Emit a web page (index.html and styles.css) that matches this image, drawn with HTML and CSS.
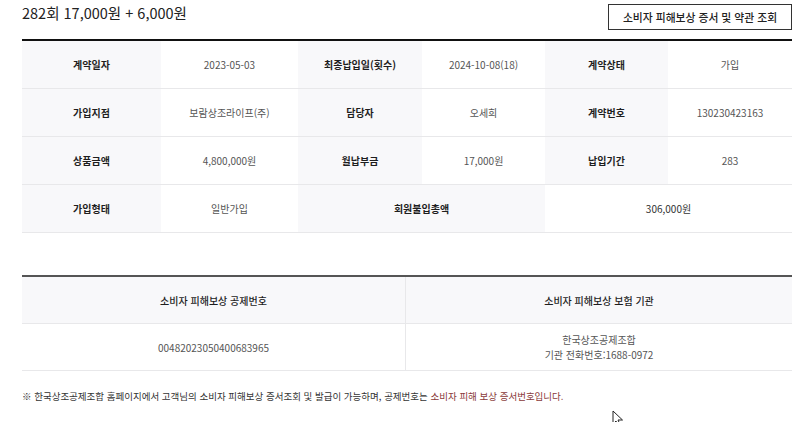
FILE: index.html
```html
<!DOCTYPE html>
<html lang="ko">
<head>
<meta charset="utf-8">
<link rel="stylesheet" href="styles.css">
</head>
<body>
<div class="page">
  <div class="head">
    <h1 class="title">282회 17,000원 + 6,000원</h1>
    <button class="btn">소비자 피해보상 증서 및 약관 조회</button>
  </div>

  <div class="info">
    <div class="c lab">계약일자</div>
    <div class="c val">2023-05-03</div>
    <div class="c lab">최종납입일(횟수)</div>
    <div class="c val">2024-10-08(18)</div>
    <div class="c lab">계약상태</div>
    <div class="c val">가입</div>

    <div class="c lab">가입지점</div>
    <div class="c val">보람상조라이프(주)</div>
    <div class="c lab">담당자</div>
    <div class="c val">오세희</div>
    <div class="c lab">계약번호</div>
    <div class="c val">130230423163</div>

    <div class="c lab">상품금액</div>
    <div class="c val">4,800,000원</div>
    <div class="c lab">월납부금</div>
    <div class="c val">17,000원</div>
    <div class="c lab">납입기간</div>
    <div class="c val">283</div>

    <div class="c lab">가입형태</div>
    <div class="c val">일반가입</div>
    <div class="c lab span2">회원불입총액</div>
    <div class="c val span2 dark">306,000원</div>
  </div>

  <div class="ins">
    <div class="c lab">소비자 피해보상 공제번호</div>
    <div class="c lab">소비자 피해보상 보험 기관</div>
    <div class="c val">00482023050400683965</div>
    <div class="c val multi"><span>한국상조공제조합</span><span>기관 전화번호:1688-0972</span></div>
  </div>

  <p class="note">※ 한국상조공제조합 홈페이지에서 고객님의 소비자 피해보상 증서조회 및 발급이 가능하며, 공제번호는 <span class="red">소비자 피해 보상 증서번호입니다.</span></p>
</div>
<svg class="cursor" width="12" height="18" viewBox="0 0 12 18"><path d="M1 1 L1 14 L4 11 L6.5 16.5 L8.5 15.5 L6 10 L10.5 10 Z" fill="#fff" stroke="#222" stroke-width="1"/></svg>
</body>
</html>
```

FILE: styles.css
```css
html, body {
  margin: 0;
  padding: 0;
  background: #fff;
  width: 800px;
  height: 422px;
  overflow: hidden;
  font-family: "Noto Sans CJK KR", "Noto Sans", sans-serif;
  color: #333;
  position: relative;
}
.page {
  width: 770px;
  margin-left: 22px;
}
.head {
  display: flex;
  justify-content: space-between;
  align-items: flex-start;
  height: 39px;
  border-bottom: 2px solid #111;
}
.title {
  margin: 0;
  font-size: 14.5px;
  font-weight: 400;
  color: #222;
  line-height: 26px;
}
.btn {
  margin-top: 4px;
  width: 184px;
  height: 26px;
  border: 1px solid #333;
  background: #fff;
  font-family: inherit;
  font-size: 10.8px;
  font-weight: 500;
  color: #222;
  padding: 0;
}
.info {
  display: grid;
  grid-template-columns: 139px 137px 124px 123px 123px 124px;
  grid-auto-rows: 48px;
}
.c {
  display: flex;
  align-items: center;
  justify-content: center;
  font-size: 10px;
  border-bottom: 1px solid #e8e8ea;
  box-sizing: border-box;
}
.lab {
  background: #f8f8fa;
  color: #1e1e1e;
  font-weight: 700;
}
.val {
  background: #fff;
  color: #555;
}
.val.dark { color: #333; }
.span2 { grid-column: span 2; }
.ins {
  margin-top: 42px;
  display: grid;
  grid-template-columns: 384px 386px;
  grid-auto-rows: 47px;
  border-top: 2px solid #555;
}
.ins .c:nth-child(1), .ins .c:nth-child(3) {
  border-right: 1px solid #e8e8ea;
}
.ins .lab { font-weight: 500; }
.multi {
  flex-direction: column;
  line-height: 15px;
}
.note {
  margin: 18px 0 0;
  font-size: 9.5px;
  color: #333;
}
.red { color: #8a3a3a; }
.cursor {
  position: absolute;
  left: 612px;
  top: 410px;
}
```
